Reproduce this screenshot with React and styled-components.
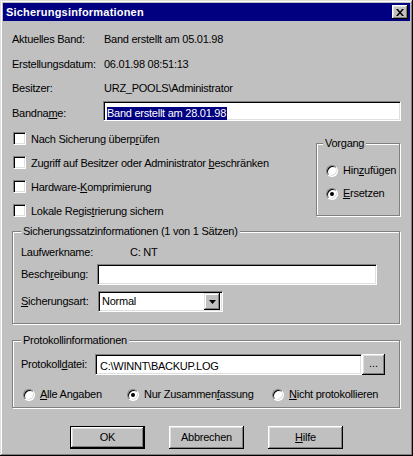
import styled, { createGlobalStyle } from 'styled-components';

const GlobalStyle = createGlobalStyle`
  html, body {
    margin: 0;
    padding: 0;
    background: #c0c0c0;
  }
`;

const Window = styled.div`
  width: 413px;
  height: 456px;
  box-sizing: border-box;
  padding: 3px;
  background: #c0c0c0;
  box-shadow: inset -1px -1px 0 #000, inset 1px 1px 0 #dfdfdf,
    inset -2px -2px 0 #808080, inset 2px 2px 0 #fff;
  display: flex;
  flex-direction: column;
  color: #000;
  font-family: "Liberation Sans", Arial, sans-serif;
  font-size: 11px;
  letter-spacing: -0.25px;
  line-height: 13px;
`;

const TitleBar = styled.div`
  height: 18px;
  flex-shrink: 0;
  display: flex;
  align-items: center;
  justify-content: space-between;
  background: #000080;
  color: #fff;
  padding: 0 2px 0 3px;
  font-weight: bold;
  letter-spacing: 0.2px;
`;

const CloseButton = styled.div`
  width: 16px;
  height: 14px;
  box-sizing: border-box;
  background: #c0c0c0;
  box-shadow: inset -1px -1px 0 #000, inset 1px 1px 0 #fff,
    inset -2px -2px 0 #808080, inset 2px 2px 0 #dfdfdf;
  display: flex;
  align-items: center;
  justify-content: center;
`;

const Body = styled.div`
  display: flex;
  flex-direction: column;
  padding: 0 9px;
`;

const Row = styled.div`
  display: flex;
  align-items: ${(p) => p.$align || 'baseline'};
  margin-top: ${(p) => p.$mt || 0}px;
`;

const Label = styled.div`
  width: ${(p) => p.$w}px;
  flex-shrink: 0;
  white-space: nowrap;
`;

const Field = styled.div`
  width: ${(p) => p.$w}px;
  height: ${(p) => p.$h || 21}px;
  box-sizing: border-box;
  background: #fff;
  border: 1px solid;
  border-color: #808080 #fff #fff #808080;
  box-shadow: inset 1px 1px 0 #000, inset -1px -1px 0 #dfdfdf;
  padding: ${(p) => p.$pt || 5}px 2px 0 ${(p) => p.$pl || 2}px;
  white-space: nowrap;
  overflow: hidden;
`;

const Selected = styled.span`
  background: #000080;
  color: #fff;
  display: inline-block;
  padding-right: 1px;
`;

const Options = styled.div`
  display: flex;
  justify-content: space-between;
  align-items: flex-start;
  margin-top: 11px;
`;

const CheckList = styled.div`
  display: flex;
  flex-direction: column;
  gap: 10px;
  padding-left: 1px;
`;

const CheckRow = styled.div`
  display: flex;
  align-items: flex-start;
  gap: 5px;
`;

const CheckBox = styled.span`
  width: 13px;
  height: 13px;
  box-sizing: border-box;
  flex-shrink: 0;
  background: #fff;
  border: 1px solid;
  border-color: #808080 #fff #fff #808080;
  box-shadow: inset 1px 1px 0 #000, inset -1px -1px 0 #dfdfdf;
`;

const CheckText = styled.span`
  padding-top: 1px;
  white-space: nowrap;
`;

const GroupBox = styled.div`
  position: relative;
  box-sizing: border-box;
  width: ${(p) => (p.$w ? `${p.$w}px` : 'auto')};
  height: ${(p) => (p.$h ? `${p.$h}px` : 'auto')};
  margin-top: ${(p) => p.$mt || 0}px;
  margin-right: 1px;
  border: 1px solid #808080;
  box-shadow: 1px 1px 0 #fff, inset 1px 1px 0 #fff;
  padding: ${(p) => p.$pad};
`;

const Caption = styled.span`
  position: absolute;
  top: -7px;
  left: ${(p) => p.$left}px;
  padding: 0 2px;
  background: #c0c0c0;
  white-space: nowrap;
`;

const RadioList = styled.div`
  display: flex;
  flex-direction: column;
  gap: 10px;
`;

const RadioRow = styled.div`
  display: flex;
  align-items: center;
  gap: 5px;
  width: ${(p) => (p.$w ? `${p.$w}px` : 'auto')};
  margin-left: ${(p) => p.$ml || 0}px;
  white-space: nowrap;
`;

const Radio = styled.span`
  position: relative;
  width: 12px;
  height: 12px;
  box-sizing: border-box;
  flex-shrink: 0;
  border-radius: 50%;
  background: #fff;
  border: 1px solid;
  border-color: #808080 #fff #fff #808080;
  box-shadow: inset 1px 1px 0 #000, inset -1px -1px 0 #dfdfdf;

  &::after {
    content: '';
    display: ${(p) => (p.$checked ? 'block' : 'none')};
    position: absolute;
    left: 3px;
    top: 3px;
    width: 4px;
    height: 4px;
    border-radius: 50%;
    background: #000;
  }
`;

const Select = styled.div`
  width: 125px;
  height: 21px;
  box-sizing: border-box;
  background: #fff;
  border: 1px solid;
  border-color: #808080 #fff #fff #808080;
  box-shadow: inset 1px 1px 0 #000, inset -1px -1px 0 #dfdfdf;
  padding: 2px;
  display: flex;
  align-items: center;
  justify-content: space-between;
`;

const SelectText = styled.span`
  padding-left: 1px;
`;

const DropButton = styled.span`
  width: 16px;
  height: 17px;
  box-sizing: border-box;
  background: #c0c0c0;
  box-shadow: inset -1px -1px 0 #000, inset 1px 1px 0 #dfdfdf,
    inset -2px -2px 0 #808080, inset 2px 2px 0 #fff;
  display: flex;
  align-items: center;
  justify-content: center;
`;

const SmallButton = styled.div`
  width: 23px;
  height: 21px;
  box-sizing: border-box;
  background: #c0c0c0;
  box-shadow: inset -1px -1px 0 #000, inset 1px 1px 0 #fff,
    inset -2px -2px 0 #808080, inset 2px 2px 0 #dfdfdf;
  display: flex;
  align-items: center;
  justify-content: center;
  letter-spacing: 0;
  padding-bottom: 2px;
`;

const ButtonRow = styled.div`
  display: flex;
  justify-content: center;
  gap: 24px;
  margin-top: 18px;
`;

const Button = styled.div`
  width: 75px;
  height: 23px;
  box-sizing: border-box;
  background: #c0c0c0;
  display: flex;
  align-items: center;
  justify-content: center;
  border: ${(p) => (p.$default ? '1px solid #000' : 'none')};
  box-shadow: inset -1px -1px 0 #000, inset 1px 1px 0 #fff,
    inset -2px -2px 0 #808080, inset 2px 2px 0 #dfdfdf;
`;

const Arrow = () => (
  <svg width="7" height="4" viewBox="0 0 7 4">
    <path d="M0 0h7L3.5 4z" fill="#000" />
  </svg>
);

const CloseIcon = () => (
  <svg width="8" height="7" viewBox="0 0 8 7">
    <path d="M0 0h2l2 2.5L6 0h2L5 3.5 8 7H6L4 4.5 2 7H0l3-3.5z" fill="#000" />
  </svg>
);

const App = () => {
  return (
    <Window>
      <GlobalStyle />
      <TitleBar>
        <span>Sicherungsinformationen</span>
        <CloseButton>
          <CloseIcon />
        </CloseButton>
      </TitleBar>

      <Body>
        <Row $mt={12}>
          <Label $w={92}>Aktuelles Band:</Label>
          <span>Band erstellt am 05.01.98</span>
        </Row>
        <Row $mt={12}>
          <Label $w={92}>Erstellungsdatum:</Label>
          <span>06.01.98 08:51:13</span>
        </Row>
        <Row $mt={11}>
          <Label $w={92}>Besitzer:</Label>
          <span>URZ_POOLS\Administrator</span>
        </Row>
        <Row $mt={6}>
          <Label $w={91}>
            Bandna<u>m</u>e:
          </Label>
          <Field $w={298} $h={20} $pl={3}>
            <Selected>Band erstellt am 28.01.98</Selected>
          </Field>
        </Row>

        <Options>
          <CheckList>
            <CheckRow>
              <CheckBox />
              <CheckText>
                Nach Sicherung überp<u>r</u>üfen
              </CheckText>
            </CheckRow>
            <CheckRow>
              <CheckBox />
              <CheckText>
                Zugriff auf Besitzer oder Administrator <u>b</u>eschränken
              </CheckText>
            </CheckRow>
            <CheckRow>
              <CheckBox />
              <CheckText>
                Hardware-<u>K</u>omprimierung
              </CheckText>
            </CheckRow>
            <CheckRow>
              <CheckBox />
              <CheckText>
                Lokale Regis<u>t</u>rierung sichern
              </CheckText>
            </CheckRow>
          </CheckList>

          <GroupBox $w={84} $h={73} $mt={11} $pad="20px 0 0 9px">
            <Caption $left={6}>Vorgang</Caption>
            <RadioList>
              <RadioRow>
                <Radio />
                <span>
                  Hin<u>z</u>ufügen
                </span>
              </RadioRow>
              <RadioRow>
                <Radio $checked />
                <span>
                  <u>E</u>rsetzen
                </span>
              </RadioRow>
            </RadioList>
          </GroupBox>
        </Options>

        <GroupBox $mt={13} $pad="14px 0 11px 8px">
          <Caption $left={8}>Sicherungssatzinformationen (1 von 1 Sätzen)</Caption>
          <Row>
            <Label $w={109}>Laufwerkname:</Label>
            <span>C: NT</span>
          </Row>
          <Row $mt={5} $align="center">
            <Label $w={76}>
              Besch<u>r</u>eibung:
            </Label>
            <Field $w={280} />
          </Row>
          <Row $mt={6} $align="center">
            <Label $w={77}>
              <u>S</u>icherungsart:
            </Label>
            <Select>
              <SelectText>Normal</SelectText>
              <DropButton>
                <Arrow />
              </DropButton>
            </Select>
          </Row>
        </GroupBox>

        <GroupBox $mt={16} $pad="13px 0 6px 8px">
          <Caption $left={8}>Protokollinformationen</Caption>
          <Row $align="center">
            <Label $w={74}>
              Protokoll<u>d</u>atei:
            </Label>
            <Field $w={267} $pl={4}>
              C:\WINNT\BACKUP.LOG
            </Field>
            <SmallButton>...</SmallButton>
          </Row>
          <Row $mt={13} $align="center">
            <RadioRow $w={104} $ml={2}>
              <Radio />
              <span>
                <u>A</u>lle Angaben
              </span>
            </RadioRow>
            <RadioRow $w={145}>
              <Radio $checked />
              <span>
                Nur Zusammen<u>f</u>assung
              </span>
            </RadioRow>
            <RadioRow>
              <Radio />
              <span>
                <u>N</u>icht protokollieren
              </span>
            </RadioRow>
          </Row>
        </GroupBox>

        <ButtonRow>
          <Button $default>OK</Button>
          <Button>Abbrechen</Button>
          <Button>
            <u>H</u>ilfe
          </Button>
        </ButtonRow>
      </Body>
    </Window>
  );
};

export default App;
